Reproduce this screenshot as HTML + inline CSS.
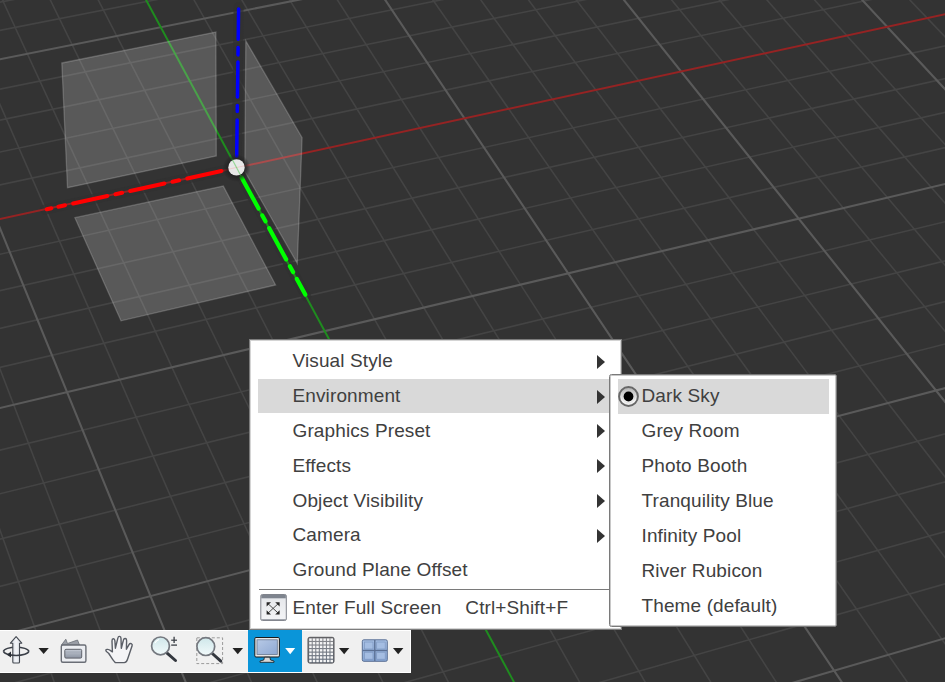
<!DOCTYPE html>
<html><head><meta charset="utf-8"><style>
html,body{margin:0;padding:0;width:945px;height:684px;overflow:hidden;background:#333;}
body{position:relative;font-family:"Liberation Sans",sans-serif;}
.menu{position:absolute;background:#fff;box-sizing:border-box;}
.it{position:absolute;font-size:19px;color:#404040;white-space:nowrap;line-height:19px;letter-spacing:0.12px;}
.hl{position:absolute;background:#d9d9d9;}
.arr{position:absolute;width:0;height:0;border-top:7px solid transparent;border-bottom:7px solid transparent;border-left:8px solid #333;}
</style></head><body>
<svg width="945" height="684" viewBox="0 0 945 684" style="position:absolute;left:0;top:0">
<rect width="945" height="684" fill="#333333"/>
<g>
<path d="M-5.0 516.2L56.7 689.0M-5.0 355.9L122.6 689.0M-5.0 92.9L254.4 689.0M0.2 -5.0L320.3 689.0M47.9 -5.0L386.1 689.0M95.7 -5.0L451.9 689.0M191.2 -5.0L583.5 689.0M238.9 -5.0L649.3 689.0M286.6 -5.0L715.0 689.0M334.2 -5.0L780.7 689.0M429.5 -5.0L912.1 689.0M477.2 -5.0L950.0 650.6M524.8 -5.0L950.0 564.1M572.4 -5.0L950.0 483.4M667.5 -5.0L950.0 337.4M715.1 -5.0L950.0 271.1M762.6 -5.0L950.0 208.7M810.1 -5.0L950.0 149.9M905.1 -5.0L950.0 42.0M-5.0 3.1L37.0 -5.0M-5.0 31.3L179.9 -5.0M-5.0 90.2L465.2 -5.0M-5.0 121.1L607.6 -5.0M-5.0 153.0L749.9 -5.0M-5.0 186.0L892.1 -5.0M-5.0 255.3L950.0 44.8M-5.0 291.7L950.0 77.5M-5.0 329.5L950.0 111.3M-5.0 368.6L950.0 146.4M-5.0 451.3L950.0 220.5M-5.0 495.0L950.0 259.7M-5.0 540.4L950.0 300.4M-5.0 587.7L950.0 342.7M-5.0 688.0L950.0 432.6M186.5 689.0L950.0 480.5M381.6 689.0L950.0 530.3M576.6 689.0L950.0 582.4" stroke="#444444" stroke-width="1.6" fill="none"/>
<path d="M-5.0 216.0L188.5 689.0M381.9 -5.0L846.4 689.0M620.0 -5.0L950.0 408.0M857.6 -5.0L950.0 94.5M-5.0 60.3L322.6 -5.0M-5.0 409.2L950.0 182.8M-5.0 636.8L950.0 386.8M771.4 689.0L950.0 636.8" stroke="#5a5a5a" stroke-width="2.1" fill="none"/>
<!-- dark halos around thick axes -->
<g stroke="#313131" stroke-linecap="round" stroke-opacity="0.72">
<line x1="44.8" y1="209.7" x2="230" y2="169" stroke-width="10"/>
<line x1="238.6" y1="7" x2="236.8" y2="160" stroke-width="10"/>
<line x1="240.6" y1="175.6" x2="306.3" y2="296.4" stroke-width="10"/>
</g>
<line x1="-5.0" y1="220.0" x2="950.0" y2="13.2" stroke="#952323" stroke-width="1.9"/>
<line x1="143.4" y1="-5.0" x2="517.7" y2="689.0" stroke="#1f8c1f" stroke-width="2"/>

<!-- planes -->
<g fill="rgba(255,255,255,0.19)" stroke="rgba(255,255,255,0.2)" stroke-width="1.3">
<polygon points="61.8,63 215.9,32.1 216.3,156 67.5,187.7"/>
<polygon points="245.8,40.8 302.1,137.7 297.3,263.4 244.8,171.6"/>
<polygon points="74.9,217.7 223.3,186.1 275.6,285 121,320.8"/>
</g>
<!-- thick axes -->
<line x1="46.8" y1="209.3" x2="221.7" y2="171.0" stroke="#ff0000" stroke-width="4.0" stroke-linecap="round" stroke-dasharray="4.7 7.2 6.8 8.3 35.0 8.3 6.8 8.3 35.0 8.3 6.8 8.3 35.0"/>
<line x1="238.6" y1="8.9" x2="236.7" y2="156.3" stroke="#0000ff" stroke-width="3.5" stroke-linecap="round" stroke-dasharray="30.3 8.3 7.4 7.1 35.1 8.3 6.2 8.3 36.3"/>
<line x1="241.6" y1="177.4" x2="305.3" y2="294.6" stroke="#00ff00" stroke-width="4.2" stroke-linecap="round" stroke-dasharray="35.5 7.8 6.7 7.8 35.5 7.8 6.7 7.8 17.8"/>
<radialGradient id="osh"><stop offset="0.6" stop-color="#222" stop-opacity="0.9"/><stop offset="1" stop-color="#222" stop-opacity="0"/></radialGradient>
<circle cx="236.5" cy="168" r="14" fill="url(#osh)"/>
<circle cx="236.5" cy="167.4" r="8.2" fill="#e8e8e8"/>
<line x1="228.5" y1="169.2" x2="244.5" y2="165.8" stroke="#ff6060" stroke-opacity="0.2" stroke-width="1"/>
<line x1="232" y1="159" x2="241" y2="176" stroke="#30c030" stroke-opacity="0.45" stroke-width="1.2"/>
</g>
</svg>
<div class="menu" style="left:249px;top:338.5px;width:373px;height:291px;border:1px solid #7c7c7c;box-shadow:inset 0 0 0 1px #d4d4d4;"></div>
<div class="hl" style="left:258px;top:379.2px;width:354px;height:34px;"></div>
<div class="it" style="left:292.5px;top:351.1px">Visual Style</div>
<div class="arr" style="left:597px;top:354.7px"></div>
<div class="it" style="left:292.5px;top:385.9px">Environment</div>
<div class="arr" style="left:597px;top:389.6px"></div>
<div class="it" style="left:292.5px;top:420.8px">Graphics Preset</div>
<div class="arr" style="left:597px;top:424.4px"></div>
<div class="it" style="left:292.5px;top:455.6px">Effects</div>
<div class="arr" style="left:597px;top:459.2px"></div>
<div class="it" style="left:292.5px;top:490.5px">Object Visibility</div>
<div class="arr" style="left:597px;top:494.1px"></div>
<div class="it" style="left:292.5px;top:525.4px">Camera</div>
<div class="arr" style="left:597px;top:529.0px"></div>
<div class="it" style="left:292.5px;top:560.2px">Ground Plane Offset</div>
<div class="it" style="left:292.5px;top:598.0px">Enter Full Screen</div>
<div class="it" style="left:465.3px;top:598.0px">Ctrl+Shift+F</div>
<svg style="position:absolute;left:259px;top:593px" width="29" height="29" viewBox="0 0 29 29">
<defs><linearGradient id="fsg" x1="0" y1="0" x2="0" y2="1"><stop offset="0" stop-color="#e4e6ea"/><stop offset="1" stop-color="#f4f5f7"/></linearGradient></defs>
<rect x="1.8" y="1.5" width="25.5" height="26" rx="1.5" fill="url(#fsg)" stroke="#80848c" stroke-width="1"/>
<rect x="2.3" y="2" width="24.5" height="3.3" fill="#7e848e"/>
<line x1="2.3" y1="26.6" x2="26.8" y2="26.6" stroke="#9a9ea6" stroke-width="1"/>
<g stroke="#3a3a3a" stroke-width="0.9">
<line x1="9" y1="10.7" x2="19.2" y2="20.1"/><line x1="19.2" y1="10.7" x2="9" y2="20.1"/>
</g>
<g fill="#262626"><polygon points="7.6,9.3 12,9.3 7.6,13.5"/><polygon points="20.6,9.3 16.2,9.3 20.6,13.5"/><polygon points="7.6,21.5 12,21.5 7.6,17.3"/><polygon points="20.6,21.5 16.2,21.5 20.6,17.3"/></g>
</svg>

<div style="position:absolute;left:258.5px;top:588.5px;width:354px;height:1.2px;background:#7a7a7a"></div>
<div class="menu" style="left:609px;top:374px;width:228px;height:253px;border:1px solid #7a7a7a;border-radius:2.5px;box-shadow:inset 0 0 0 1px #c8c8c8;"></div>
<div class="hl" style="left:618px;top:379.3px;width:210.5px;height:34.3px;"></div>
<div class="it" style="left:641.5px;top:386.1px">Dark Sky</div>
<div class="it" style="left:641.5px;top:421.0px">Grey Room</div>
<div class="it" style="left:641.5px;top:456.0px">Photo Booth</div>
<div class="it" style="left:641.5px;top:490.9px">Tranquility Blue</div>
<div class="it" style="left:641.5px;top:525.9px">Infinity Pool</div>
<div class="it" style="left:641.5px;top:560.9px">River Rubicon</div>
<div class="it" style="left:641.5px;top:595.8px">Theme (default)</div>
<svg style="position:absolute;left:617px;top:385px" width="24" height="24" viewBox="0 0 24 24">
<defs><linearGradient id="rg" x1="0" y1="0" x2="0" y2="1"><stop offset="0" stop-color="#b0b0b0"/><stop offset="0.75" stop-color="#f6f6f6"/><stop offset="1" stop-color="#e8e8e8"/></linearGradient></defs>
<circle cx="11.5" cy="11.5" r="9.4" fill="url(#rg)" stroke="#686868" stroke-width="2"/>
<circle cx="11.5" cy="11.5" r="6.3" fill="none" stroke="#d0d0d0" stroke-width="0.8" stroke-opacity="0.6"/>
<circle cx="11.5" cy="11.5" r="4.9" fill="#000"/>
</svg>

<div style="position:absolute;left:0;top:630px;width:411px;height:43px;background:#f0f0f0;box-sizing:border-box;border:1.5px solid #fff;border-left:none;"></div>
<div style="position:absolute;left:248px;top:630px;width:53.5px;height:42.3px;background:#0a95d9"></div>
<svg style="position:absolute;left:0;top:630px" width="411" height="43" viewBox="0 630 411 43">
<defs>
<linearGradient id="arg" x1="0" y1="0" x2="1" y2="0"><stop offset="0" stop-color="#c9ced8"/><stop offset="0.5" stop-color="#f4f6fa"/><stop offset="1" stop-color="#d0d4dc"/></linearGradient>
<linearGradient id="film" x1="0" y1="0" x2="0" y2="1"><stop offset="0" stop-color="#c4cad4"/><stop offset="1" stop-color="#8c94a2"/></linearGradient>
<linearGradient id="lens" x1="0" y1="0" x2="0" y2="1"><stop offset="0" stop-color="#cfe7ea"/><stop offset="1" stop-color="#f2fafb"/></linearGradient>
<linearGradient id="scr" x1="0" y1="0" x2="1" y2="1"><stop offset="0" stop-color="#b7c9e6"/><stop offset="1" stop-color="#8ea8d2"/></linearGradient>
<linearGradient id="gic" x1="0" y1="0" x2="0" y2="1"><stop offset="0" stop-color="#8a8a8e"/><stop offset="1" stop-color="#66707e"/></linearGradient><linearGradient id="gcell" gradientUnits="userSpaceOnUse" x1="0" y1="638" x2="0" y2="662"><stop offset="0" stop-color="#ffffff"/><stop offset="1" stop-color="#c4d0e2"/></linearGradient>
<linearGradient id="vpc" x1="0" y1="0" x2="0" y2="1"><stop offset="0" stop-color="#a9c2e6"/><stop offset="1" stop-color="#86a6d4"/></linearGradient>
</defs>
<!-- orbit -->
<path d="M3.4 651.3 A12.8 4.5 0 0 1 28.9 651.3" fill="none" stroke="#3a3f48" stroke-width="1.5"/>
<path d="M12.8 662 L12.8 643.2 L10.4 643.2 L16.1 636.6 L21.8 643.2 L19.5 643.2 L19.5 662 Q19.5 663 18.5 663 L13.8 663 Q12.8 663 12.8 662 Z" fill="url(#arg)" stroke="#454a52" stroke-width="1.1" stroke-linejoin="round"/>
<path d="M3.4 651.3 A12.8 4.5 0 0 0 28.9 651.3" fill="none" stroke="#3a3f48" stroke-width="1.5"/>
<polygon points="6.8,654.8 11,651.6 11,657.6" fill="#2a2e36"/>
<polygon points="38.5,648 48.8,648 43.65,654" fill="#222"/>
<!-- film -->
<path d="M61.5 645 L65.8 639.2 L67.5 643.5 L77.5 640 L79.5 645 Z" fill="#9a9ea6" stroke="#6a6e76" stroke-width="0.8" stroke-linejoin="round"/>
<rect x="61.3" y="645" width="24.6" height="17.2" rx="1.5" fill="#eceef2" stroke="#6a6e76" stroke-width="1.4"/>
<rect x="64.8" y="649.3" width="16.9" height="8.8" rx="1.2" fill="url(#film)" stroke="#5e626a" stroke-width="1"/>
<line x1="65.3" y1="652" x2="81.2" y2="652" stroke="#9aa2ae" stroke-width="0.6"/>
<!-- hand -->
<path d="M115.2 662.6 C112.5 660 110.5 656 108.8 653.5 C107.5 652.3 105.6 651.5 105.8 650.2 C106.1 648.9 108.8 649.2 110.6 650.6 L112.4 651.8 L112 641 C111.9 638.2 114.6 638 114.9 640.8 L115.4 648.2 L117.8 638.3 C118.4 635.6 121 635.8 121 638.6 L121.3 648.3 L123.4 640.2 C124 637.6 126.8 638 126.6 640.6 L126.4 649.2 L129 644.6 C130.2 642.6 132.8 643.6 132.1 645.8 L127.8 658.5 C127 661.2 126 662.6 124.2 662.6 Z" fill="#f4f4f6" stroke="#5a5e66" stroke-width="1.4" stroke-linejoin="round"/>
<!-- zoom -->
<line x1="166.8" y1="652.8" x2="175.5" y2="660.5" stroke="#33373e" stroke-width="3" stroke-linecap="round"/>
<circle cx="160.5" cy="645.9" r="8.9" fill="url(#lens)" stroke="#74787f" stroke-width="1.7"/>
<path d="M155 643 A6 6 0 0 1 159 639.5" fill="none" stroke="#fff" stroke-width="1.2"/>
<line x1="171.2" y1="640.2" x2="177" y2="640.2" stroke="#3a3e44" stroke-width="1.2"/>
<line x1="174.1" y1="636.8" x2="174.1" y2="643" stroke="#3a3e44" stroke-width="1.3"/>
<line x1="171.2" y1="645.1" x2="177" y2="645.1" stroke="#3a3e44" stroke-width="1.3"/>
<!-- zoom window -->
<rect x="196.8" y="637.8" width="25.8" height="25.8" fill="none" stroke="#9a9a9a" stroke-width="1" stroke-dasharray="3 2"/>
<line x1="212.3" y1="653.5" x2="220.8" y2="661.2" stroke="#33373e" stroke-width="3" stroke-linecap="round"/>
<circle cx="205.8" cy="646.6" r="8.9" fill="url(#lens)" stroke="#74787f" stroke-width="1.7"/>
<polygon points="232.5,648 243,648 237.75,654.3" fill="#222"/>
<!-- monitor -->
<rect x="254.8" y="637.5" width="24.6" height="19.5" rx="1.2" fill="#e8e8e8" stroke="#1a1a1a" stroke-width="1"/>
<rect x="257" y="639.8" width="20.3" height="14.8" fill="url(#scr)" stroke="#6a7a90" stroke-width="0.8"/>
<path d="M264.5 657.2 L269.8 657.2 L270.5 660 L274 661 L274 662.3 L260 662.3 L260 661 L263.8 660 Z" fill="#d8d8d8" stroke="#1a1a1a" stroke-width="0.8"/>
<polygon points="285.2,648 295.2,648 290.2,654.2" fill="#fff"/>
<!-- grid icon -->
<rect x="308" y="637.3" width="26" height="25.8" rx="1.8" fill="url(#gic)" stroke="#505054" stroke-width="1"/>
<rect x="309.20" y="638.50" width="2.5" height="2.4" fill="#f6f6f6"/><rect x="312.75" y="638.50" width="2.5" height="2.4" fill="#f6f6f6"/><rect x="316.30" y="638.50" width="2.5" height="2.4" fill="#f6f6f6"/><rect x="319.85" y="638.50" width="2.5" height="2.4" fill="#f6f6f6"/><rect x="323.40" y="638.50" width="2.5" height="2.4" fill="#f6f6f6"/><rect x="326.95" y="638.50" width="2.5" height="2.4" fill="#f6f6f6"/><rect x="330.50" y="638.50" width="2.5" height="2.4" fill="#f6f6f6"/><rect x="309.20" y="642.05" width="2.5" height="2.4" fill="#f6f6f6"/><rect x="312.75" y="642.05" width="2.5" height="2.4" fill="#f6f6f6"/><rect x="316.30" y="642.05" width="2.5" height="2.4" fill="#f6f6f6"/><rect x="319.85" y="642.05" width="2.5" height="2.4" fill="#f6f6f6"/><rect x="323.40" y="642.05" width="2.5" height="2.4" fill="#f6f6f6"/><rect x="326.95" y="642.05" width="2.5" height="2.4" fill="#f6f6f6"/><rect x="330.50" y="642.05" width="2.5" height="2.4" fill="#f6f6f6"/><rect x="309.20" y="645.60" width="2.5" height="2.4" fill="#f6f6f6"/><rect x="312.75" y="645.60" width="2.5" height="2.4" fill="#f6f6f6"/><rect x="316.30" y="645.60" width="2.5" height="2.4" fill="#f6f6f6"/><rect x="319.85" y="645.60" width="2.5" height="2.4" fill="#f6f6f6"/><rect x="323.40" y="645.60" width="2.5" height="2.4" fill="#f6f6f6"/><rect x="326.95" y="645.60" width="2.5" height="2.4" fill="#f6f6f6"/><rect x="330.50" y="645.60" width="2.5" height="2.4" fill="#f6f6f6"/><rect x="309.20" y="649.15" width="2.5" height="2.4" fill="#f6f6f6"/><rect x="312.75" y="649.15" width="2.5" height="2.4" fill="#f6f6f6"/><rect x="316.30" y="649.15" width="2.5" height="2.4" fill="#f6f6f6"/><rect x="319.85" y="649.15" width="2.5" height="2.4" fill="#f6f6f6"/><rect x="323.40" y="649.15" width="2.5" height="2.4" fill="#f6f6f6"/><rect x="326.95" y="649.15" width="2.5" height="2.4" fill="#f6f6f6"/><rect x="330.50" y="649.15" width="2.5" height="2.4" fill="#f6f6f6"/><rect x="309.20" y="652.70" width="2.5" height="2.4" fill="#f6f6f6"/><rect x="312.75" y="652.70" width="2.5" height="2.4" fill="#f6f6f6"/><rect x="316.30" y="652.70" width="2.5" height="2.4" fill="#f6f6f6"/><rect x="319.85" y="652.70" width="2.5" height="2.4" fill="#f6f6f6"/><rect x="323.40" y="652.70" width="2.5" height="2.4" fill="#f6f6f6"/><rect x="326.95" y="652.70" width="2.5" height="2.4" fill="#f6f6f6"/><rect x="330.50" y="652.70" width="2.5" height="2.4" fill="#f6f6f6"/><rect x="309.20" y="656.25" width="2.5" height="2.4" fill="#f6f6f6"/><rect x="312.75" y="656.25" width="2.5" height="2.4" fill="#f6f6f6"/><rect x="316.30" y="656.25" width="2.5" height="2.4" fill="#f6f6f6"/><rect x="319.85" y="656.25" width="2.5" height="2.4" fill="#f6f6f6"/><rect x="323.40" y="656.25" width="2.5" height="2.4" fill="#f6f6f6"/><rect x="326.95" y="656.25" width="2.5" height="2.4" fill="#f6f6f6"/><rect x="330.50" y="656.25" width="2.5" height="2.4" fill="#f6f6f6"/><rect x="309.20" y="659.80" width="2.5" height="2.4" fill="#f6f6f6"/><rect x="312.75" y="659.80" width="2.5" height="2.4" fill="#f6f6f6"/><rect x="316.30" y="659.80" width="2.5" height="2.4" fill="#f6f6f6"/><rect x="319.85" y="659.80" width="2.5" height="2.4" fill="#f6f6f6"/><rect x="323.40" y="659.80" width="2.5" height="2.4" fill="#f6f6f6"/><rect x="326.95" y="659.80" width="2.5" height="2.4" fill="#f6f6f6"/><rect x="330.50" y="659.80" width="2.5" height="2.4" fill="#f6f6f6"/>
<polygon points="339,648 349.3,648 344.15,654.2" fill="#222"/>
<!-- viewports -->
<rect x="362.3" y="639.8" width="25" height="21.5" rx="1.5" fill="url(#vpc)" stroke="#5b7094" stroke-width="1"/>
<g fill="#a4bde2" stroke="#7d96bf" stroke-width="0.7">
<rect x="364.5" y="642" width="8.5" height="7"/><rect x="376.7" y="642" width="8.5" height="7"/>
<rect x="364.5" y="652.2" width="8.5" height="7"/><rect x="376.7" y="652.2" width="8.5" height="7"/>
</g>
<line x1="374.8" y1="640" x2="374.8" y2="661" stroke="#5b7094" stroke-width="1.4"/>
<line x1="362.5" y1="650.5" x2="387" y2="650.5" stroke="#5b7094" stroke-width="1.4"/>
<polygon points="393,648 403.4,648 398.2,654.2" fill="#222"/>
</svg>

<div style="position:absolute;left:0;top:682px;width:945px;height:2px;background:#fff"></div>
</body></html>
